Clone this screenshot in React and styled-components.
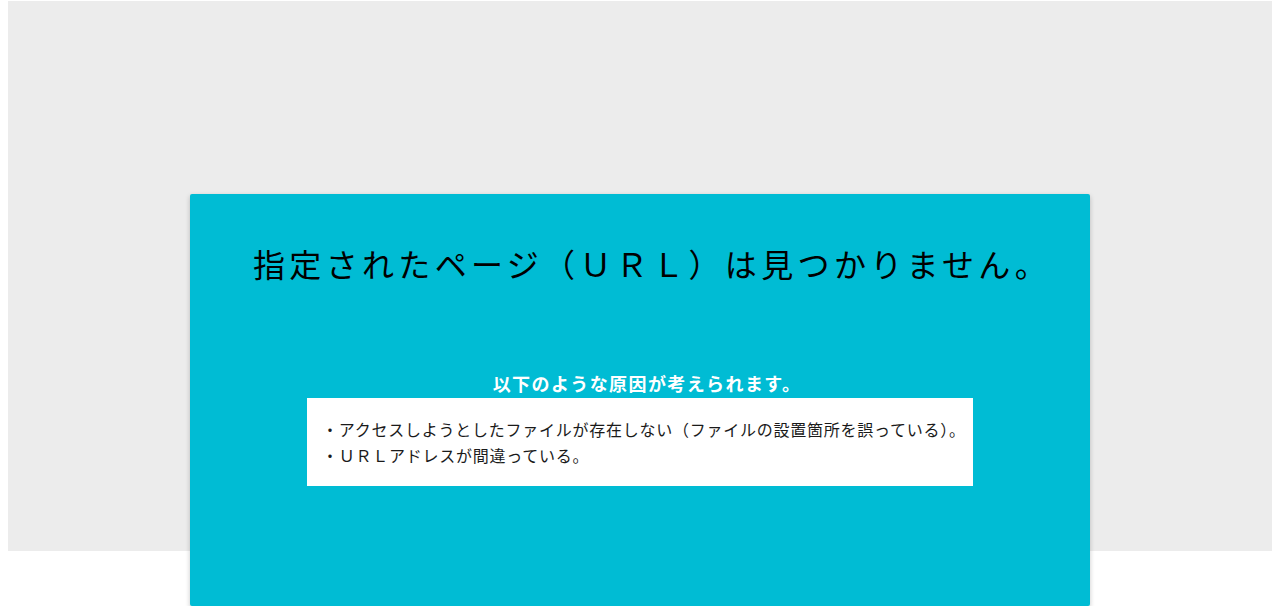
import React from "react";
import styled, { createGlobalStyle } from "styled-components";

const GlobalStyle = createGlobalStyle`
  body {
    margin: 0 0 0 8px;
    padding-top: 1px;
    background: #fff;
    font-family: "Noto Sans CJK JP", "Noto Sans", sans-serif;
  }
`;

// grey band behind the top of the card; the card runs past its lower edge
const Backdrop = styled.div`
  width: 1264px;
  background: linear-gradient(#ececec 0, #ececec 550px, transparent 550px);
  padding-top: 193px;
`;

const Card = styled.section`
  width: 900px;
  height: 412px;
  margin: 0 auto;
  box-sizing: border-box;
  padding-top: 45px;
  background: #00bcd4;
  border-radius: 2px;
  box-shadow: 0 2px 5px rgba(0, 0, 0, 0.22);
  display: flex;
  flex-direction: column;
  align-items: center;
`;

const Title = styled.h1`
  margin: 0;
  padding-left: 24px;
  font-size: 32px;
  line-height: 48px;
  font-weight: 400;
  letter-spacing: 4.35px;
  color: #000;
  text-align: center;
`;

const Subtitle = styled.h2`
  margin: 83px 0 1px;
  padding-left: 14px;
  font-size: 18px;
  line-height: 27px;
  font-weight: 700;
  letter-spacing: 1.4px;
  color: #fff;
  text-align: center;
`;

const ReasonBox = styled.ul`
  margin: 0;
  list-style: none;
  width: 666px;
  box-sizing: border-box;
  padding: 18px 15px 18px;
  background: #fff;
`;

const Reason = styled.li`
  font-size: 16px;
  line-height: 26px;
  letter-spacing: 0.75px;
  color: #1a1a1a;
  white-space: nowrap;
`;

const reasons = [
  "・アクセスしようとしたファイルが存在しない（ファイルの設置箇所を誤っている）。",
  "・ＵＲＬアドレスが間違っている。",
];

const App = () => (
  <>
    <GlobalStyle />
    <Backdrop>
      <Card>
        <Title>指定されたページ（ＵＲＬ）は見つかりません。</Title>
        <Subtitle>以下のような原因が考えられます。</Subtitle>
        <ReasonBox>
          {reasons.map((text, i) => (
            <Reason key={i}>{text}</Reason>
          ))}
        </ReasonBox>
      </Card>
    </Backdrop>
  </>
);

export default App;
